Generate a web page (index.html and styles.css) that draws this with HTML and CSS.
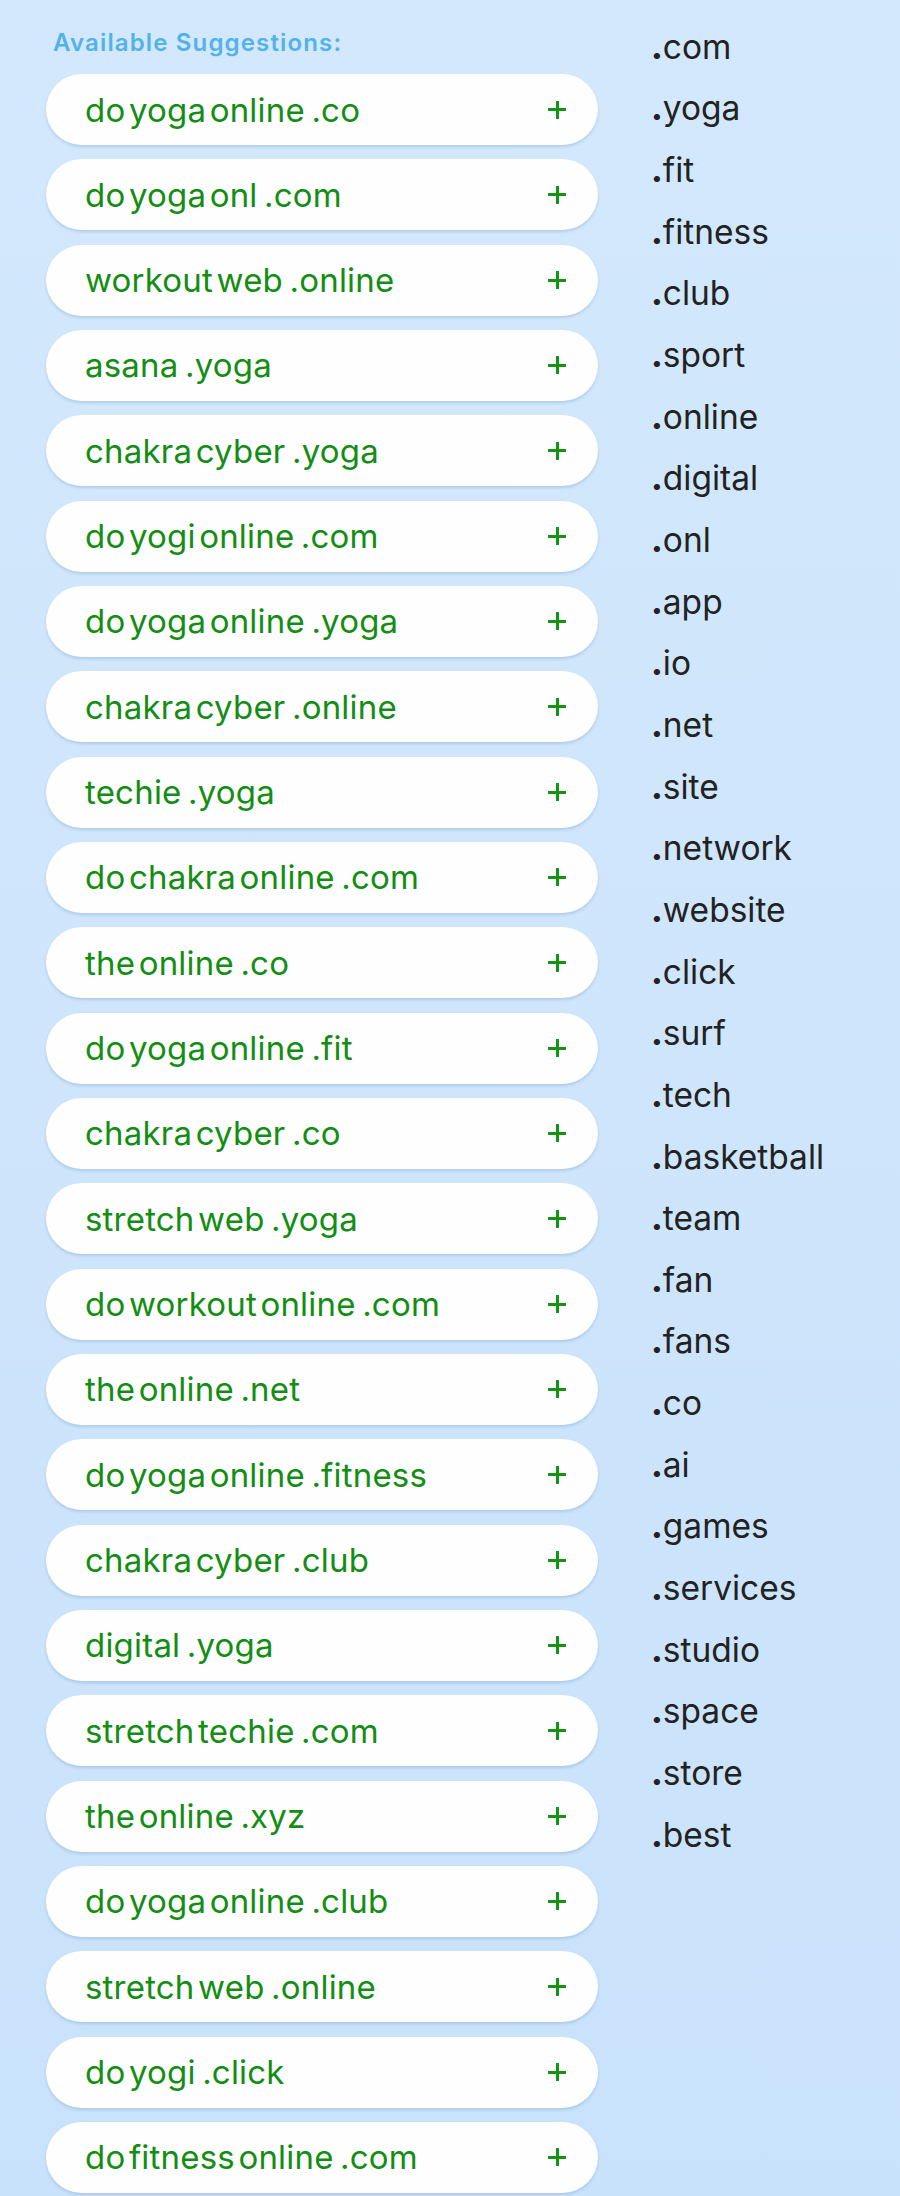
FILE: index.html
```html
<!DOCTYPE html>
<html>
<head>
<meta charset="utf-8">
<link rel="stylesheet" href="styles.css">
</head>
<body>
<div class="page">
  <div class="suggestions">
    <div class="heading">Available Suggestions:</div>
    <ul class="pills">
      <li class="pill"><span class="name"><span>do</span><span>yoga</span><span>online</span><span class="tld">.co</span></span><span class="plus"></span></li>
      <li class="pill"><span class="name"><span>do</span><span>yoga</span><span>onl</span><span class="tld">.com</span></span><span class="plus"></span></li>
      <li class="pill"><span class="name"><span>workout</span><span>web</span><span class="tld">.online</span></span><span class="plus"></span></li>
      <li class="pill"><span class="name"><span>asana</span><span class="tld">.yoga</span></span><span class="plus"></span></li>
      <li class="pill"><span class="name"><span>chakra</span><span>cyber</span><span class="tld">.yoga</span></span><span class="plus"></span></li>
      <li class="pill"><span class="name"><span>do</span><span>yogi</span><span>online</span><span class="tld">.com</span></span><span class="plus"></span></li>
      <li class="pill"><span class="name"><span>do</span><span>yoga</span><span>online</span><span class="tld">.yoga</span></span><span class="plus"></span></li>
      <li class="pill"><span class="name"><span>chakra</span><span>cyber</span><span class="tld">.online</span></span><span class="plus"></span></li>
      <li class="pill"><span class="name"><span>techie</span><span class="tld">.yoga</span></span><span class="plus"></span></li>
      <li class="pill"><span class="name"><span>do</span><span>chakra</span><span>online</span><span class="tld">.com</span></span><span class="plus"></span></li>
      <li class="pill"><span class="name"><span>the</span><span>online</span><span class="tld">.co</span></span><span class="plus"></span></li>
      <li class="pill"><span class="name"><span>do</span><span>yoga</span><span>online</span><span class="tld">.fit</span></span><span class="plus"></span></li>
      <li class="pill"><span class="name"><span>chakra</span><span>cyber</span><span class="tld">.co</span></span><span class="plus"></span></li>
      <li class="pill"><span class="name"><span>stretch</span><span>web</span><span class="tld">.yoga</span></span><span class="plus"></span></li>
      <li class="pill"><span class="name"><span>do</span><span>workout</span><span>online</span><span class="tld">.com</span></span><span class="plus"></span></li>
      <li class="pill"><span class="name"><span>the</span><span>online</span><span class="tld">.net</span></span><span class="plus"></span></li>
      <li class="pill"><span class="name"><span>do</span><span>yoga</span><span>online</span><span class="tld">.fitness</span></span><span class="plus"></span></li>
      <li class="pill"><span class="name"><span>chakra</span><span>cyber</span><span class="tld">.club</span></span><span class="plus"></span></li>
      <li class="pill"><span class="name"><span>digital</span><span class="tld">.yoga</span></span><span class="plus"></span></li>
      <li class="pill"><span class="name"><span>stretch</span><span>techie</span><span class="tld">.com</span></span><span class="plus"></span></li>
      <li class="pill"><span class="name"><span>the</span><span>online</span><span class="tld">.xyz</span></span><span class="plus"></span></li>
      <li class="pill"><span class="name"><span>do</span><span>yoga</span><span>online</span><span class="tld">.club</span></span><span class="plus"></span></li>
      <li class="pill"><span class="name"><span>stretch</span><span>web</span><span class="tld">.online</span></span><span class="plus"></span></li>
      <li class="pill"><span class="name"><span>do</span><span>yogi</span><span class="tld">.click</span></span><span class="plus"></span></li>
      <li class="pill"><span class="name"><span>do</span><span>fitness</span><span>online</span><span class="tld">.com</span></span><span class="plus"></span></li>
    </ul>
  </div>
  <ul class="tlds">
    <li><b>.</b>com</li>
    <li><b>.</b>yoga</li>
    <li><b>.</b>fit</li>
    <li><b>.</b>fitness</li>
    <li><b>.</b>club</li>
    <li><b>.</b>sport</li>
    <li><b>.</b>online</li>
    <li><b>.</b>digital</li>
    <li><b>.</b>onl</li>
    <li><b>.</b>app</li>
    <li><b>.</b>io</li>
    <li><b>.</b>net</li>
    <li><b>.</b>site</li>
    <li><b>.</b>network</li>
    <li><b>.</b>website</li>
    <li><b>.</b>click</li>
    <li><b>.</b>surf</li>
    <li><b>.</b>tech</li>
    <li><b>.</b>basketball</li>
    <li><b>.</b>team</li>
    <li><b>.</b>fan</li>
    <li><b>.</b>fans</li>
    <li><b>.</b>co</li>
    <li><b>.</b>ai</li>
    <li><b>.</b>games</li>
    <li><b>.</b>services</li>
    <li><b>.</b>studio</li>
    <li><b>.</b>space</li>
    <li><b>.</b>store</li>
    <li><b>.</b>best</li>
  </ul>
</div>
</body>
</html>
```

FILE: styles.css
```css
html, body {
  margin: 0;
  padding: 0;
}
body {
  width: 900px;
  height: 2196px;
  overflow: hidden;
  background: linear-gradient(180deg, #d3e8fc 0%, #c9e2fb 100%);
  font-family: Inter, "Noto Sans", sans-serif;
}
.page {
  display: flex;
  align-items: flex-start;
}
.suggestions {
  width: 552px;
  margin-left: 46px;
}
.heading {
  padding: 28px 0 0 7px;
  height: 30px;
  margin-bottom: 16px;
  font-size: 24px;
  line-height: 30px;
  font-weight: 600;
  letter-spacing: 1.15px;
  color: #52b2ea;
}
.pills {
  list-style: none;
  margin: 0;
  padding: 0;
  display: flex;
  flex-direction: column;
  gap: 14.33px;
}
.pill {
  height: 71px;
  box-sizing: border-box;
  background: #fefefe;
  border-radius: 36px;
  box-shadow: 0 2px 3px rgba(40, 90, 140, 0.18);
  display: flex;
  align-items: center;
  justify-content: space-between;
  padding: 0 32px 0 39px;
}
.name {
  display: flex;
  gap: 3.5px;
  font-size: 33px;
  line-height: 40px;
  color: #138d13;
  letter-spacing: 0.2px;
}
.name .tld {
  margin-left: 3px;
}
.plus {
  position: relative;
  width: 18px;
  height: 18px;
}
.plus::before,
.plus::after {
  content: "";
  position: absolute;
  background: #139513;
}
.plus::before {
  left: 0;
  right: 0;
  top: 7.5px;
  height: 3px;
}
.plus::after {
  top: 0;
  bottom: 0;
  left: 7.5px;
  width: 3px;
}
.tlds {
  list-style: none;
  margin: 16.7px 0 0 53px;
  padding: 0;
  font-size: 33.5px;
  line-height: 61.65px;
  color: #222222;
}
.tlds b {
  font-weight: 800;
}
```
